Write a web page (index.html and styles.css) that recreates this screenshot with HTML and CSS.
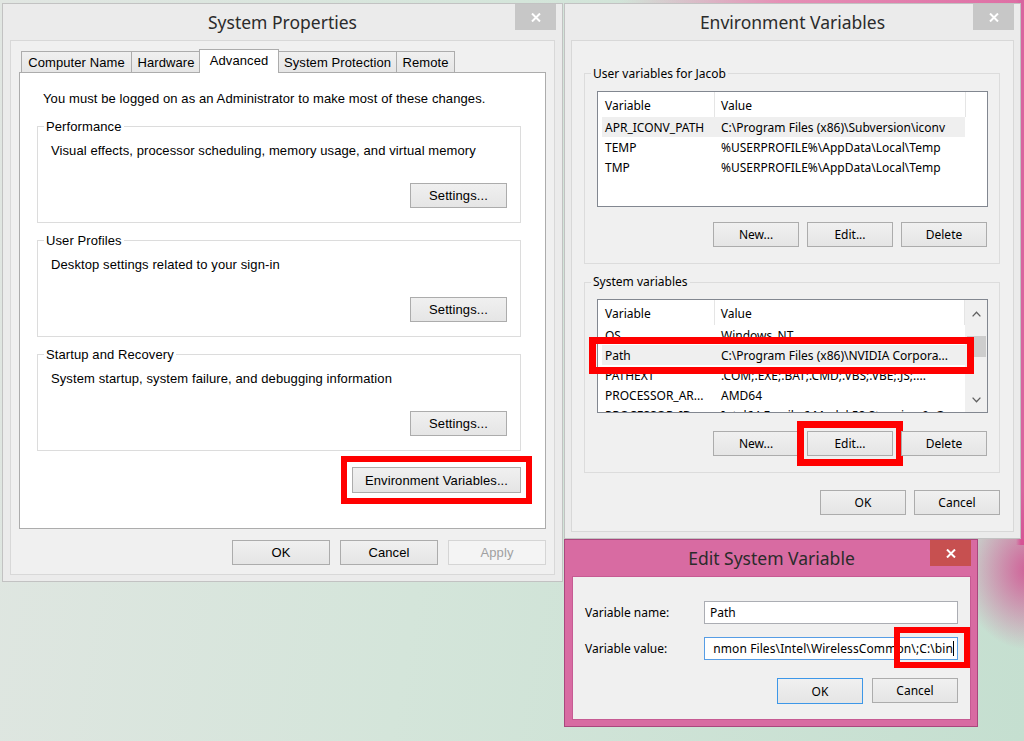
FILE: index.html
```html
<!DOCTYPE html>
<html lang="en">
<head>
<meta charset="utf-8">
<title>System Properties - Environment Variables</title>
<link rel="stylesheet" href="styles.css">
</head>
<body>
<main class="desktop">

  <section class="win win-sys">
    <header class="titlebar">
      <h1 class="title">System Properties</h1>
      <button class="close close-gray close-sys" aria-label="Close">
        <svg width="10" height="9" viewBox="0 0 10 9"><path d="M1 0.5 L9 8.5 M9 0.5 L1 8.5" stroke="#fff" stroke-width="2" fill="none"/></svg>
      </button>
    </header>
    <div class="client sys-client">
      <nav class="tabs">
        <div class="tab tab-cn">Computer Name</div>
        <div class="tab tab-hw">Hardware</div>
        <div class="tab tab-adv is-active">Advanced</div>
        <div class="tab tab-sp">System Protection</div>
        <div class="tab tab-rm">Remote</div>
      </nav>
      <div class="tabpanel">
        <p class="intro">You must be logged on as an Administrator to make most of these changes.</p>
        <fieldset class="sgroup">
          <legend>Performance</legend>
          <p class="sgroup-desc">Visual effects, processor scheduling, memory usage, and virtual memory</p>
          <div class="sgroup-actions"><button class="btn sbtn btn-settings">Settings...</button></div>
        </fieldset>
        <fieldset class="sgroup">
          <legend>User Profiles</legend>
          <p class="sgroup-desc">Desktop settings related to your sign-in</p>
          <div class="sgroup-actions"><button class="btn sbtn btn-settings">Settings...</button></div>
        </fieldset>
        <fieldset class="sgroup">
          <legend>Startup and Recovery</legend>
          <p class="sgroup-desc">System startup, system failure, and debugging information</p>
          <div class="sgroup-actions"><button class="btn sbtn btn-settings">Settings...</button></div>
        </fieldset>
        <div class="env-actions"><button class="btn sbtn btn-env mark-6">Environment Variables...</button></div>
      </div>
      <div class="sys-actions">
        <button class="btn sbtn btn-dlg">OK</button>
        <button class="btn sbtn btn-dlg">Cancel</button>
        <button class="btn sbtn btn-dlg" disabled>Apply</button>
      </div>
    </div>
  </section>

  <section class="win win-env">
    <header class="titlebar">
      <h1 class="title">Environment Variables</h1>
      <button class="close close-gray" aria-label="Close">
        <svg width="10" height="9" viewBox="0 0 10 9"><path d="M1 0.5 L9 8.5 M9 0.5 L1 8.5" stroke="#fff" stroke-width="2" fill="none"/></svg>
      </button>
    </header>
    <div class="client env-client">
      <fieldset class="egroup egroup-user">
        <legend>User variables for Jacob</legend>
        <div class="lv lv-user">
          <div class="lv-main">
            <div class="lv-head">
              <div class="hc hc-var">Variable</div>
              <div class="hc hc-val">Value</div>
              <div class="hc hc-fill"></div>
            </div>
            <div class="lv-row is-sel"><span class="c-var">APR_ICONV_PATH</span><span class="c-val">C:\Program Files (x86)\Subversion\iconv</span></div>
            <div class="lv-row"><span class="c-var">TEMP</span><span class="c-val">%USERPROFILE%\AppData\Local\Temp</span></div>
            <div class="lv-row"><span class="c-var">TMP</span><span class="c-val">%USERPROFILE%\AppData\Local\Temp</span></div>
          </div>
        </div>
        <div class="egroup-actions">
          <button class="btn ebtn">New...</button>
          <button class="btn ebtn">Edit...</button>
          <button class="btn ebtn">Delete</button>
        </div>
      </fieldset>
      <fieldset class="egroup egroup-sys">
        <legend>System variables</legend>
        <div class="lv-wrap">
          <div class="lv lv-sys">
            <div class="lv-main">
              <div class="lv-head">
                <div class="hc hc-var">Variable</div>
                <div class="hc hc-val">Value</div>
              </div>
              <div class="lv-row"><span class="c-var">OS</span><span class="c-val">Windows_NT</span></div>
              <div class="lv-row is-sel"><span class="c-var">Path</span><span class="c-val">C:\Program Files (x86)\NVIDIA Corpora...</span></div>
              <div class="lv-row"><span class="c-var">PATHEXT</span><span class="c-val">.COM;.EXE;.BAT;.CMD;.VBS;.VBE;.JS;....</span></div>
              <div class="lv-row"><span class="c-var">PROCESSOR_AR...</span><span class="c-val">AMD64</span></div>
              <div class="lv-row"><span class="c-var">PROCESSOR_ID...</span><span class="c-val">Intel64 Family 6 Model 58 Stepping 9, GenuineIntel</span></div>
            </div>
            <div class="sb">
              <div class="sb-arrow sb-up"><svg width="9" height="6" viewBox="0 0 9 6"><path d="M0.6 5.4 L4.5 1.2 L8.4 5.4" fill="none" stroke="#606060" stroke-width="1.3"/></svg></div>
              <div class="sb-thumb"></div>
              <div class="sb-track"></div>
              <div class="sb-arrow sb-down"><svg width="9" height="6" viewBox="0 0 9 6"><path d="M0.6 0.6 L4.5 4.8 L8.4 0.6" fill="none" stroke="#606060" stroke-width="1.3"/></svg></div>
            </div>
          </div>
          <div class="mark-box mark-path"></div>
        </div>
        <div class="egroup-actions">
          <button class="btn ebtn">New...</button>
          <button class="btn ebtn mark-7">Edit...</button>
          <button class="btn ebtn">Delete</button>
        </div>
      </fieldset>
      <div class="env-dlg-actions">
        <button class="btn ebtn">OK</button>
        <button class="btn ebtn">Cancel</button>
      </div>
    </div>
  </section>

  <section class="win win-edit">
    <header class="titlebar">
      <h1 class="title">Edit System Variable</h1>
      <button class="close close-red" aria-label="Close">
        <svg width="10" height="9" viewBox="0 0 10 9"><path d="M1 0.5 L9 8.5 M9 0.5 L1 8.5" stroke="#fff" stroke-width="2" fill="none"/></svg>
      </button>
    </header>
    <div class="client edit-client">
      <div class="frow">
        <span class="flabel">Variable name:</span>
        <div class="field"><span class="field-text">Path</span></div>
      </div>
      <div class="frow">
        <span class="flabel">Variable value:</span>
        <div class="field-wrap">
          <div class="field-focus"><span class="field-line" dir="ltr">nmon Files\Intel\WirelessCommon\;C:\bin<span class="caret"></span></span></div>
          <div class="mark-box mark-value"></div>
        </div>
      </div>
      <div class="edit-actions">
        <button class="btn ebtn btn-default">OK</button>
        <button class="btn ebtn">Cancel</button>
      </div>
    </div>
  </section>

</main>
</body>
</html>
```

FILE: styles.css
```css
* { box-sizing: border-box; }

html, body { margin: 0; padding: 0; }

body {
  width: 1024px;
  height: 741px;
  overflow: hidden;
  font-family: "Liberation Sans", Arial, sans-serif;
  color: #000;
  background:
    radial-gradient(70px 80px at 1030px 570px, rgba(210, 70, 140, 0.85), rgba(210, 70, 140, 0)),
    linear-gradient(90deg, rgba(220, 100, 160, 0) 1016px, #d9659f 1021px) 0 0 / 100% 545px no-repeat,
    linear-gradient(90deg, rgba(231, 140, 180, 0) 620px, #e590b6 780px, #de6ea4 1024px) 0 0 / 100% 4px no-repeat,
    linear-gradient(100deg, #e1e6e2 0%, #d4e5da 45%, #c5dfd0 100%);
}

.desktop {
  position: relative;
  width: 1024px;
  height: 741px;
}

/* ---------- window chrome ---------- */
.win {
  position: absolute;
  display: flex;
  flex-direction: column;
  border: 1px solid #c2c2c2;
  background: #ebebeb;
}

.win-sys { left: 2px; top: 3px; width: 561px; height: 579px; padding: 0 7px 6px 7px; }
.win-env { left: 564px; top: 3px; width: 457px; height: 536px; padding: 0 6px 6px 6px; }
.win-edit {
  left: 564px; top: 539px; width: 414px; height: 188px;
  padding: 0 6px 6px 7px;
  background: #d86ba2;
  border-color: #a9477d;
}

.titlebar {
  display: grid;
  grid-template-columns: 1fr auto 1fr;
  height: 36px;
  flex: none;
}

.title {
  grid-column: 2;
  margin: 0;
  padding-top: 6px;
  font-family: "Noto Sans", "Open Sans", sans-serif;
  font-weight: 400;
  font-size: 17.5px;
  line-height: 24px;
  color: #2b2b2b;
  white-space: nowrap;
}

.close {
  grid-column: 3;
  justify-self: end;
  align-self: start;
  width: 41px;
  height: 26px;
  border: 0;
  padding: 0;
  display: flex;
  align-items: center;
  justify-content: center;
}
.close-gray { background: #c7c7c7; }
.close-red { background: #c75050; }
.close-sys { margin-right: -1px; }

.client {
  flex: 1;
  display: flex;
  flex-direction: column;
  border: 1px solid #d8d8d8;
  background: #f0f0f0;
  min-height: 0;
}

/* ---------- buttons ---------- */
.btn {
  height: 25px;
  border: 1px solid #acacac;
  background: linear-gradient(#f0f0f0, #e5e5e5);
  color: #000;
  padding: 0;
  white-space: nowrap;
}
.sbtn {
  font-family: "Liberation Sans", Arial, sans-serif;
  font-size: 13px;
  letter-spacing: 0.1px;
}
.ebtn {
  font-family: "Noto Sans", "Open Sans", sans-serif;
  font-size: 12px;
  width: 86px;
}
.btn:disabled {
  border-color: #d5d5d5;
  background: #f4f4f4;
  color: #a0a0a0;
}
.btn-default { border-color: #3d97e8; height: 26px; }

.mark-6 { outline: 6px solid #ff0000; outline-offset: 5px; }
.mark-7 { outline: 7px solid #ff0000; outline-offset: 3px; }

.mark-box {
  position: absolute;
  border: 7px solid #ff0000;
  pointer-events: none;
}

/* ---------- System Properties ---------- */
.sys-client {
  padding: 8px 8px 0 8px;
  font-size: 13px;
  letter-spacing: 0.1px;
}

.tabs {
  display: flex;
  align-items: flex-end;
  height: 23px;
  margin-left: 2px;
}

.tab {
  height: 21px;
  margin-right: -1px;
  border: 1px solid #acacac;
  border-bottom: 0;
  background: linear-gradient(#f0f0f0, #e6e6e6);
  display: flex;
  align-items: center;
  justify-content: center;
  padding-top: 1px;
  white-space: nowrap;
}
.tab.is-active {
  position: relative;
  z-index: 1;
  height: 24px;
  margin-left: -1px;
  margin-bottom: -1px;
  padding: 0 0 3px;
  background: #fff;
}
.tab-cn { width: 111px; }
.tab-hw { width: 70px; }
.tab-adv { width: 80px; }
.tab-sp { width: 119px; }
.tab-rm { width: 59px; }

.tabpanel {
  height: 457px;
  border: 1px solid #acacac;
  background: #fff;
  flex: none;
}

.intro {
  margin: 17px 0 0 23px;
  padding-top: 1px;
  line-height: 16px;
}

.sgroup {
  margin: 11px 24px 0 17px;
  padding: 8px 13px 14px 13px;
  border: 1px solid #dcdcdc;
  min-width: 0;
}
.sgroup + .sgroup { margin-top: 9px; }
.sgroup legend {
  margin-left: -7px;
  padding: 1px 2px 0;
  line-height: 16px;
}
.sgroup-desc { margin: 0; line-height: 16px; }
.sgroup-actions {
  display: flex;
  justify-content: flex-end;
  margin-top: 24px;
}
.btn-settings { width: 97px; }

.env-actions {
  display: flex;
  justify-content: flex-end;
  margin: 16px 24px 0 0;
}
.btn-env { width: 169px; height: 26px; }

.sys-actions {
  display: flex;
  justify-content: flex-end;
  gap: 10px;
  margin-top: 11px;
}
.btn-dlg { width: 98px; }

/* ---------- Environment Variables ---------- */
.env-client {
  font-family: "Noto Sans", "Open Sans", sans-serif;
  font-size: 12px;
  padding: 24px 13px 0 12px;
}

.egroup {
  margin: 0;
  padding: 10px 11px 16px 12px;
  border: 1px solid #dcdcdc;
  min-width: 0;
}
.egroup-sys { margin-top: 10px; padding-top: 9px; }
.egroup legend {
  margin-left: -6px;
  padding: 0 2px;
  line-height: 16px;
}
.egroup-user legend { padding-top: 1px; }
.egroup-user { padding-top: 9px; }

.lv {
  display: flex;
  border: 1px solid #828790;
  background: #fff;
  overflow: hidden;
}
.lv-user { height: 116px; }
.lv-sys { height: 114px; }
.lv-main { flex: 1; min-width: 0; }

.lv-head { display: flex; height: 25px; }
.hc {
  border-right: 1px solid #e5e5e5;
  line-height: 23px;
  padding-top: 2px;
  white-space: nowrap;
}
.hc-var { width: 117px; padding-left: 7px; }
.hc-val { width: 251px; padding-left: 6px; }
.hc-fill { flex: 1; border-right: 0; }

.lv-row {
  display: flex;
  width: 363px;
  height: 20px;
  margin-left: 4px;
  line-height: 22px;
  white-space: nowrap;
}
.lv-row.is-sel { background: #efefef; }
.c-var { width: 112px; height: 20px; padding-left: 3px; overflow: hidden; }
.c-val { flex: 1; min-width: 0; height: 20px; padding-left: 7px; overflow: hidden; }

.sb {
  width: 22px;
  flex: none;
  display: flex;
  flex-direction: column;
  background: #f0f0f0;
}
.sb-arrow {
  display: flex;
  align-items: center;
  justify-content: center;
  padding-left: 1px;
}
.sb-up { height: 27px; }
.sb-thumb {
  height: 21px;
  margin: 9px 1px 0 2px;
  background: #cdcdcd;
}
.sb-track { flex: 1; }
.sb-down { height: 24px; }

.lv-wrap { position: relative; }
.mark-path { left: -8px; top: 38px; width: 385px; height: 37px; }

.egroup-actions {
  display: flex;
  justify-content: flex-end;
  gap: 8px;
  margin: 15px 1px 0 0;
}
.egroup-sys .egroup-actions { margin-top: 18px; }

.env-dlg-actions {
  display: flex;
  justify-content: flex-end;
  gap: 8px;
  margin-top: 17px;
}

/* ---------- Edit System Variable ---------- */
.edit-client {
  border-color: #c65b93;
  font-family: "Noto Sans", "Open Sans", sans-serif;
  font-size: 12px;
  padding: 24px 12px 0 12px;
}

.frow {
  display: flex;
  align-items: center;
  height: 23px;
}
.frow + .frow { margin-top: 13px; }
.flabel { width: 119px; flex: none; }

.field-wrap { position: relative; flex: 1; min-width: 0; }
.field {
  flex: 1;
  min-width: 0;
  height: 23px;
  border: 1px solid #abadb3;
  background: #fff;
  display: flex;
  align-items: center;
  padding: 0 5px;
  overflow: hidden;
  white-space: nowrap;
}
.field-focus {
  height: 23px;
  border: 1px solid #569de5;
  background: #fff;
  padding: 0 3px 0 0;
  overflow: hidden;
  white-space: nowrap;
  direction: rtl;
  text-align: right;
  line-height: 21px;
  letter-spacing: 0.1px;
}
.field-line { direction: ltr; unicode-bidi: isolate; }
.caret {
  display: inline-block;
  width: 1px;
  height: 15px;
  vertical-align: -3px;
  background: #000;
}
.mark-value { left: 190px; top: -10px; width: 76px; height: 41px; border-width: 6px; }

.edit-actions {
  display: flex;
  justify-content: flex-end;
  gap: 9px;
  margin-top: 18px;
}
```
